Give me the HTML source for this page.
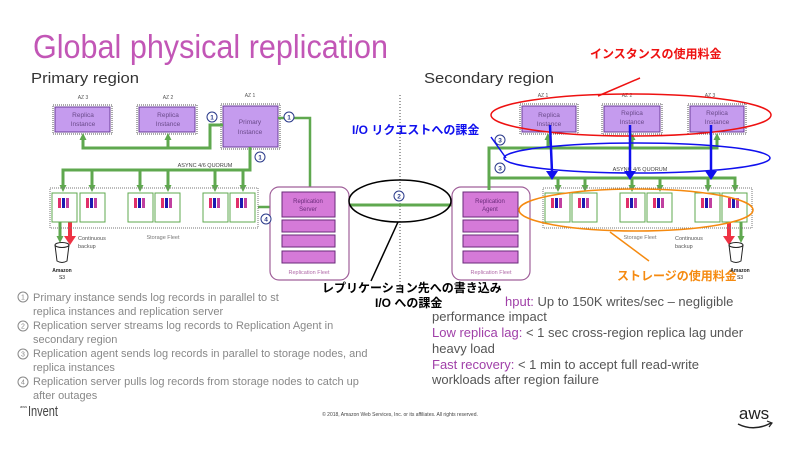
<!DOCTYPE html>
<html><head><meta charset="utf-8"><style>
html,body{margin:0;padding:0;background:#fff;}
svg{display:block;font-family:"Liberation Sans","Noto Sans CJK JP",sans-serif;}
</style></head><body>
<svg width="800" height="451" viewBox="0 0 800 451" xmlns="http://www.w3.org/2000/svg">
<defs>
<marker id="ga" markerUnits="userSpaceOnUse" markerWidth="7" markerHeight="7" refX="4" refY="3.5" orient="auto"><path d="M0,0 L7,3.5 L0,7 z" fill="#5fa84f"/></marker>
<g id="node"><rect x="0" y="0" width="25" height="29" fill="#fff" stroke="#5fa84f" stroke-width="1"/><rect x="6" y="5" width="3" height="10" fill="#e0306a"/><rect x="10" y="5" width="3" height="10" fill="#1a1ab0"/><rect x="14" y="5" width="3" height="10" fill="#c040a0"/></g>
<g id="bucket" fill="none" stroke="#222" stroke-width="1"><ellipse cx="0" cy="0" rx="7" ry="2.5"/><path d="M-7,0 L-5,16 Q0,19 5,16 L7,0"/></g>
</defs>

<text x="33" y="58" font-size="33" fill="#c256b6" textLength="355" lengthAdjust="spacingAndGlyphs">Global physical replication</text>
<text x="31" y="83" font-size="15" fill="#333" textLength="108" lengthAdjust="spacingAndGlyphs">Primary region</text>
<text x="424" y="83" font-size="15" fill="#333" textLength="130" lengthAdjust="spacingAndGlyphs">Secondary region</text>

<line x1="400" y1="95" x2="400" y2="290" stroke="#444" stroke-width="1" stroke-dasharray="1,2"/>

<!-- PRIMARY -->
<g font-size="5" fill="#555" text-anchor="middle"><text x="83" y="99">AZ 3</text><text x="168" y="99">AZ 2</text><text x="250" y="97">AZ 1</text></g>
<g stroke="#555" stroke-dasharray="1,1" fill="none"><rect x="53" y="105" width="59" height="29"/><rect x="137" y="105" width="60" height="29"/><rect x="221" y="104" width="59" height="45"/></g>
<g fill="#c59bee" stroke="#6a3d9a" stroke-width="1"><rect x="55" y="107" width="55" height="25"/><rect x="139" y="107" width="56" height="25"/><rect x="223" y="106" width="55" height="41"/></g>
<g font-size="6.5" fill="#6a4a8a" text-anchor="middle"><text x="83" y="117">Replica</text><text x="83" y="126">Instance</text><text x="168" y="117">Replica</text><text x="168" y="126">Instance</text><text x="250" y="124">Primary</text><text x="250" y="134">Instance</text></g>

<g stroke="#5fa84f" stroke-width="3" fill="none">
<path d="M223,125 H210 V148 H83 V136" marker-end="url(#ga)"/>
<path d="M168,148 V136" marker-end="url(#ga)"/>
<path d="M250,147 V170 H63 V189" marker-end="url(#ga)"/>
<path d="M92,170 V189" marker-end="url(#ga)"/><path d="M140,170 V189" marker-end="url(#ga)"/><path d="M168,170 V189" marker-end="url(#ga)"/><path d="M215,170 V189" marker-end="url(#ga)"/><path d="M243,170 V189" marker-end="url(#ga)"/>
<path d="M278,118 H310 V190" stroke-width="2.5"/>
<path d="M258,207 H277" marker-end="url(#ga)" stroke-width="2.5"/>
<path d="M335,205 H462" stroke-width="3"/>
<path d="M60,222 V240" marker-end="url(#ga)"/>
</g>
<path d="M70,222 V236" stroke="#ee3344" stroke-width="4"/><path d="M64,236 L76,236 L70,245z" fill="#ee3344"/>
<text x="205" y="167" font-size="5.5" fill="#444" text-anchor="middle">ASYNC 4/6 QUORUM</text>
<rect x="50" y="188" width="208" height="40" fill="none" stroke="#777" stroke-dasharray="1,1"/>
<use href="#node" x="52" y="193"/><use href="#node" x="80" y="193"/><use href="#node" x="128" y="193"/><use href="#node" x="155" y="193"/><use href="#node" x="203" y="193"/><use href="#node" x="230" y="193"/>
<text x="163" y="239" font-size="5.5" fill="#777" text-anchor="middle">Storage Fleet</text>
<text x="78" y="240" font-size="5.5" fill="#555">Continuous</text><text x="78" y="248" font-size="5.5" fill="#555">backup</text>
<use href="#bucket" x="62" y="245"/>
<text x="62" y="272" font-size="5" font-weight="bold" fill="#222" text-anchor="middle">Amazon</text><text x="62" y="279" font-size="5" fill="#222" text-anchor="middle">S3</text>

<rect x="270" y="187" width="79" height="93" rx="9" fill="#fff" stroke="#a0609a" stroke-width="1.2"/>
<g fill="#d57ad8" stroke="#6a2a7a" stroke-width="1"><rect x="282" y="192" width="53" height="25"/><rect x="282" y="220" width="53" height="12"/><rect x="282" y="235" width="53" height="12"/><rect x="282" y="251" width="53" height="12"/></g>
<text x="308" y="203" font-size="6" fill="#6a2a7a" text-anchor="middle">Replication</text><text x="308" y="211" font-size="6" fill="#6a2a7a" text-anchor="middle">Server</text>
<text x="309" y="274" font-size="5.5" fill="#b06aa8" text-anchor="middle">Replication Fleet</text>

<!-- SECONDARY -->
<rect x="452" y="187" width="78" height="93" rx="9" fill="#fff" stroke="#a0609a" stroke-width="1.2"/>
<g fill="#d57ad8" stroke="#6a2a7a" stroke-width="1"><rect x="463" y="192" width="55" height="25"/><rect x="463" y="220" width="55" height="12"/><rect x="463" y="235" width="55" height="12"/><rect x="463" y="251" width="55" height="12"/></g>
<text x="490" y="203" font-size="6" fill="#6a2a7a" text-anchor="middle">Replication</text><text x="490" y="211" font-size="6" fill="#6a2a7a" text-anchor="middle">Agent</text>
<text x="491" y="274" font-size="5.5" fill="#b06aa8" text-anchor="middle">Replication Fleet</text>

<g font-size="5" fill="#555" text-anchor="middle"><text x="543" y="97">AZ 1</text><text x="627" y="97">AZ 2</text><text x="710" y="97">AZ 3</text></g>
<g stroke="#555" stroke-dasharray="1,1" fill="none"><rect x="520" y="104" width="58" height="30"/><rect x="602" y="104" width="60" height="30"/><rect x="688" y="104" width="58" height="30"/></g>
<g fill="#c59bee" stroke="#6a3d9a" stroke-width="1"><rect x="522" y="106" width="54" height="26"/><rect x="604" y="106" width="56" height="26"/><rect x="690" y="106" width="54" height="26"/></g>
<g font-size="6.5" fill="#6a4a8a" text-anchor="middle"><text x="549" y="117">Replica</text><text x="549" y="126">Instance</text><text x="632" y="115">Replica</text><text x="632" y="124">Instance</text><text x="717" y="115">Replica</text><text x="717" y="124">Instance</text></g>

<g stroke="#5fa84f" stroke-width="3" fill="none">
<path d="M489,190 V148 H717 V136" marker-end="url(#ga)"/>
<path d="M548,148 V136" marker-end="url(#ga)"/><path d="M632,148 V136" marker-end="url(#ga)"/>
<path d="M489,178 H735 V189" marker-end="url(#ga)"/>
<path d="M558,178 V189" marker-end="url(#ga)"/><path d="M585,178 V189" marker-end="url(#ga)"/><path d="M632,178 V189" marker-end="url(#ga)"/><path d="M660,178 V189" marker-end="url(#ga)"/><path d="M708,178 V189" marker-end="url(#ga)"/>
<path d="M741,222 V240" marker-end="url(#ga)"/>
</g>
<path d="M729,222 V236" stroke="#ee3344" stroke-width="4"/><path d="M723,236 L735,236 L729,245z" fill="#ee3344"/>
<text x="640" y="171" font-size="5.5" fill="#444" text-anchor="middle">ASYNC 4/6 QUORUM</text>
<rect x="543" y="188" width="209" height="40" fill="none" stroke="#777" stroke-dasharray="1,1"/>
<use href="#node" x="545" y="193"/><use href="#node" x="572" y="193"/><use href="#node" x="620" y="193"/><use href="#node" x="647" y="193"/><use href="#node" x="695" y="193"/><use href="#node" x="722" y="193"/>
<text x="640" y="239" font-size="5.5" fill="#777" text-anchor="middle">Storage Fleet</text>
<text x="675" y="240" font-size="5.5" fill="#555">Continuous</text><text x="675" y="248" font-size="5.5" fill="#555">backup</text>
<use href="#bucket" x="736" y="245"/>

<!-- circled numbers -->
<g fill="#fff" stroke="#2a3a8a" stroke-width="1"><circle cx="212" cy="117" r="5"/><circle cx="289" cy="117" r="5"/><circle cx="260" cy="157" r="5"/><circle cx="266" cy="219" r="5"/><circle cx="399" cy="196" r="5"/><circle cx="500" cy="140" r="5"/><circle cx="500" cy="168" r="5"/></g>
<g font-size="6.5" fill="#2a3a8a" text-anchor="middle" font-weight="bold"><text x="212" y="119.5">1</text><text x="289" y="119.5">1</text><text x="260" y="159.5">1</text><text x="266" y="221.5">4</text><text x="399" y="198.5">2</text><text x="500" y="142.5">3</text><text x="500" y="170.5">3</text></g>

<!-- annotations -->
<ellipse cx="400" cy="201" rx="51" ry="21" fill="none" stroke="#000" stroke-width="1.5"/>
<line x1="398" y1="222" x2="371" y2="281" stroke="#000" stroke-width="1.5"/>
<ellipse cx="631" cy="115" rx="140" ry="21" fill="none" stroke="#ee1111" stroke-width="1.5"/>
<line x1="598" y1="96" x2="640" y2="78" stroke="#ee1111" stroke-width="1.5"/>
<ellipse cx="637" cy="158" rx="133" ry="15" fill="none" stroke="#1010ee" stroke-width="1.5"/>
<line x1="491" y1="137" x2="506" y2="158" stroke="#1010ee" stroke-width="1.5"/>
<g stroke="#1010ee" stroke-width="2.5"><line x1="550" y1="125" x2="552" y2="172"/><line x1="630" y1="125" x2="630" y2="172"/><line x1="711" y1="125" x2="711" y2="172"/></g>
<g fill="#1010ee"><path d="M546,171 L558,171 L552,180z"/><path d="M624,171 L636,171 L630,180z"/><path d="M705,171 L717,171 L711,180z"/></g>
<ellipse cx="636" cy="210" rx="117" ry="21" fill="none" stroke="#f58a10" stroke-width="1.5"/>
<line x1="610" y1="232" x2="649" y2="261" stroke="#f58a10" stroke-width="1.5"/>

<text x="590" y="58" font-size="12" font-weight="bold" fill="#ee1111">インスタンスの使用料金</text>
<text x="352" y="134" font-size="12" font-weight="bold" fill="#1010ee">I/O リクエストへの課金</text>
<text x="617" y="280" font-size="12" font-weight="bold" fill="#f58a10">ストレージの使用料金</text>
<text x="740" y="272" font-size="5" font-weight="bold" fill="#222" text-anchor="middle">Amazon</text><text x="740" y="279" font-size="5" fill="#222" text-anchor="middle">S3</text>
<text x="322" y="292" font-size="12" font-weight="bold" fill="#000">レプリケーション先への書き込み</text>
<text x="375" y="307" font-size="12" font-weight="bold" fill="#000">I/O への課金</text>

<!-- bullets -->
<g font-size="11" fill="#888">
<g fill="none" stroke="#888"><circle cx="23" cy="297" r="5"/><circle cx="23" cy="326" r="5"/><circle cx="23" cy="354" r="5"/><circle cx="23" cy="382" r="5"/></g>
<g font-size="7" text-anchor="middle"><text x="23" y="299.5">1</text><text x="23" y="328.5">2</text><text x="23" y="356.5">3</text><text x="23" y="384.5">4</text></g>
<text x="33" y="301">Primary instance sends log records in parallel to st</text>
<text x="33" y="315">replica instances and replication server</text>
<text x="33" y="329">Replication server streams log records to Replication Agent in</text>
<text x="33" y="343">secondary region</text>
<text x="33" y="357">Replication agent sends log records in parallel to storage nodes, and</text>
<text x="33" y="371">replica instances</text>
<text x="33" y="385">Replication server pulls log records from storage nodes to catch up</text>
<text x="33" y="399">after outages</text>
</g>
<g font-size="13" fill="#555">
<text x="505" y="306"><tspan fill="#a040a8">hput:</tspan> Up to 150K writes/sec – negligible</text>
<text x="432" y="321">performance impact</text>
<text x="432" y="337"><tspan fill="#a040a8">Low replica lag:</tspan> &lt; 1 sec cross-region replica lag under</text>
<text x="432" y="353">heavy load</text>
<text x="432" y="369"><tspan fill="#a040a8">Fast recovery:</tspan> &lt; 1 min to accept full read-write</text>
<text x="432" y="384">workloads after region failure</text>
</g>

<!-- footer -->
<text x="20" y="408" font-size="4" fill="#444">aws</text>
<text x="28" y="416" font-size="15" fill="#444" textLength="30" lengthAdjust="spacingAndGlyphs">Invent</text>
<text x="400" y="416" font-size="5" fill="#444" text-anchor="middle">© 2018, Amazon Web Services, Inc. or its affiliates. All rights reserved.</text>
<text x="754" y="419" font-size="17" fill="#222" text-anchor="middle">aws</text>
<path d="M738,424 Q754,432 771,423" fill="none" stroke="#222" stroke-width="1.5"/>
<path d="M767,421 L772,423 L769,427" fill="none" stroke="#222" stroke-width="1.2"/>
</svg>
</body></html>
